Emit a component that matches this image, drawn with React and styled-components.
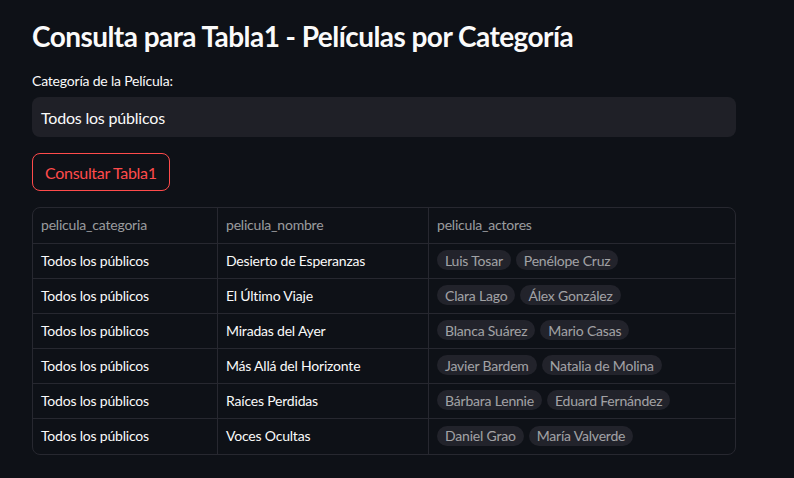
import React from "react";
import styled, { createGlobalStyle } from "styled-components";

const Global = createGlobalStyle`
  html, body { margin: 0; padding: 0; background: #0e1117; }
  body { font-family: Lato, "Noto Sans", sans-serif; color: #fafafa; letter-spacing: -0.2px; }
`;

const Page = styled.main`
  width: 704px;
  padding: 17px 32px 24px 32px;
  display: flex;
  flex-direction: column;
`;

const Title = styled.h1`
  margin: 0;
  font-size: 28px;
  line-height: 38px;
  font-weight: 700;
  letter-spacing: -0.55px;
  color: #fafafa;
`;

const Label = styled.label`
  margin-top: 16px;
  font-size: 14px;
  line-height: 20px;
  color: #fafafa;
`;

const Select = styled.div`
  margin-top: 6px;
  height: 40px;
  border-radius: 8px;
  background: #1f2027;
  display: flex;
  align-items: center;
  padding: 0 9px;
  font-size: 16px;
  color: #fafafa;
`;

const Button = styled.button`
  margin-top: 16px;
  align-self: flex-start;
  height: 38px;
  padding: 0 12px;
  border: 1px solid #ff4b4b;
  border-radius: 8px;
  background: transparent;
  color: #ff4b4b;
  font-family: inherit;
  font-size: 16px;
  letter-spacing: -0.3px;
`;

const Table = styled.div`
  margin-top: 16px;
  border: 1px solid #272830;
  border-radius: 8px;
  display: grid;
  grid-template-columns: 185px 211px 1fr;
  overflow: hidden;
`;

const Cell = styled.div`
  height: ${(p) => (p.$head ? 35 : 34)}px;
  display: flex;
  align-items: center;
  gap: 5px;
  padding: 0 8px 2px 8px;
  box-sizing: border-box;
  height: ${(p) => (p.$head ? 36 : 35)}px;
  font-size: 14px;
  color: ${(p) => (p.$head ? "rgba(250,250,250,0.6)" : "#fafafa")};
  border-right: ${(p) => (p.$last ? "none" : "1px solid #272830")};
  border-bottom: ${(p) => (p.$bottom ? "none" : "1px solid #272830")};
`;

const Chip = styled.span`
  height: 20px;
  padding: 0 8px;
  border-radius: 10px;
  background: #22232b;
  color: rgba(250,250,250,0.6);
  display: inline-flex;
  align-items: center;
  font-size: 14px;
`;

const rows = [
  ["Desierto de Esperanzas", ["Luis Tosar", "Penélope Cruz"]],
  ["El Último Viaje", ["Clara Lago", "Álex González"]],
  ["Miradas del Ayer", ["Blanca Suárez", "Mario Casas"]],
  ["Más Allá del Horizonte", ["Javier Bardem", "Natalia de Molina"]],
  ["Raíces Perdidas", ["Bárbara Lennie", "Eduard Fernández"]],
  ["Voces Ocultas", ["Daniel Grao", "María Valverde"]],
];

export default function App() {
  return (
    <>
      <Global />
      <Page>
        <Title>Consulta para Tabla1 - Películas por Categoría</Title>
        <Label>Categoría de la Película:</Label>
        <Select>Todos los públicos</Select>
        <Button>Consultar Tabla1</Button>
        <Table>
          <Cell $head>pelicula_categoria</Cell>
          <Cell $head>pelicula_nombre</Cell>
          <Cell $head $last>pelicula_actores</Cell>
          {rows.map(([name, actors], i) => {
            const bottom = i === rows.length - 1;
            return (
              <React.Fragment key={name}>
                <Cell $bottom={bottom}>Todos los públicos</Cell>
                <Cell $bottom={bottom}>{name}</Cell>
                <Cell $bottom={bottom} $last>
                  {actors.map((a) => (
                    <Chip key={a}>{a}</Chip>
                  ))}
                </Cell>
              </React.Fragment>
            );
          })}
        </Table>
      </Page>
    </>
  );
}
